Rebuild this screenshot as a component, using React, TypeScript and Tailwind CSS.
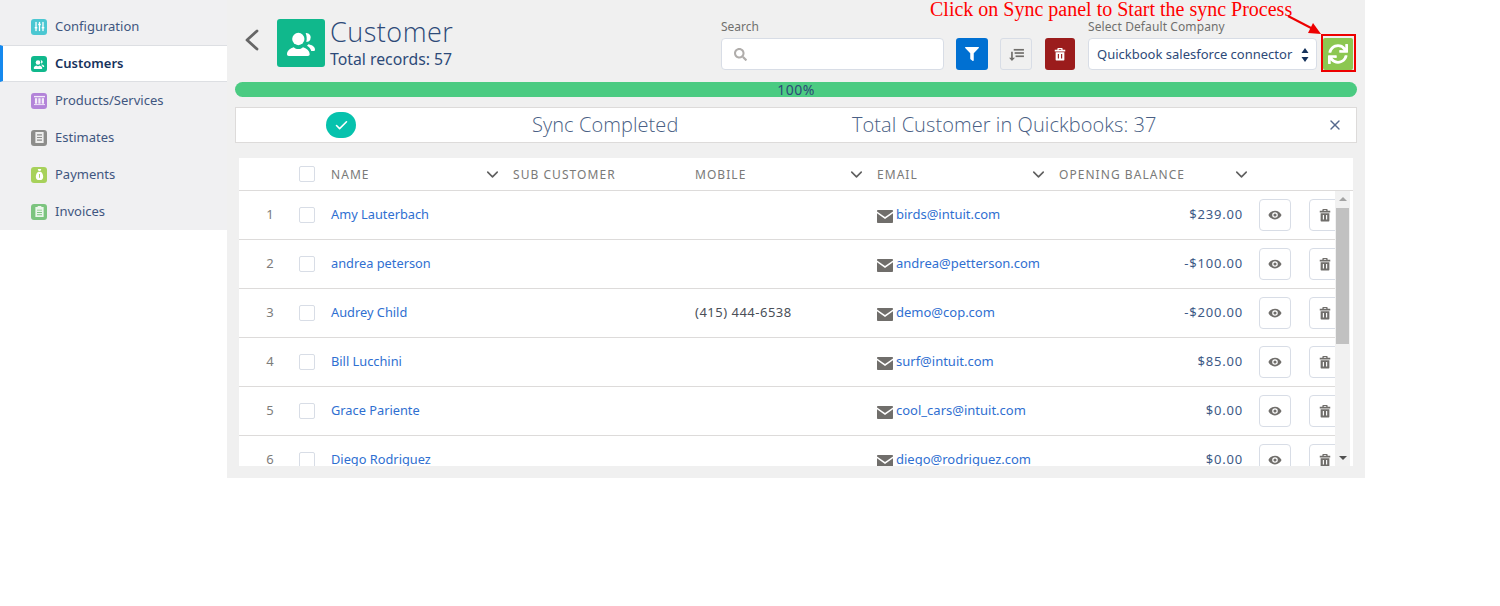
import React from "react";
import { FaSync, FaFilter, FaSearch } from "react-icons/fa";
import { Check, X, ChevronDown } from "lucide-react";

const People = ({ className = "" }: { className?: string }) => (
  <svg viewBox="0 0 24 24" className={className} fill="white">
    <circle cx="10" cy="9" r="4.600" />
    <path d="M1.500 20.500c0-3 2.500-4.600 5-5.400 1 1 2.200 1.400 3.500 1.400s2.500-.4 3.500-1.400c2.500.8 5 2.400 5 5.400 0 .8-.6 1.300-1.300 1.300H2.800c-.7 0-1.300-.5-1.300-1.300z" />
    <path d="M15.500 4.500a3.500 3.500 0 0 1 3.400 5.200 3.500 3.500 0 0 1-2.900 1.600c.6-2.500.2-4.900-.5-6.800z" />
    <path d="M17.500 13c2.500.4 5 1.700 5 4 0 .6-.5 1-1 1h-1.800c-.4-1.800-1.600-3-3.200-4z" />
  </svg>
);

const Trash = ({ className = "", color = "#706e6b" }: { className?: string; color?: string }) => (
  <svg viewBox="0 0 16 16" className={className} fill={color}>
    <path fillRule="evenodd" d="M6 1h4a1 1 0 0 1 1 1v1h3v2H2V3h3V2a1 1 0 0 1 1-1zm.6 1.200V3h2.800v-.8z" />
    <path fillRule="evenodd" d="M3 6h10v8.500a.8.8 0 0 1-.8.800H3.800a.8.8 0 0 1-.8-.8zm2.500 2v5h1.300V8zm3.700 0v5h1.300V8z" />
  </svg>
);

const Eye = () => (
  <svg viewBox="0 0 16 16" className="w-[14px] h-[14px]" fill="#706e6b">
    <path fillRule="evenodd" d="M8 3c3.500 0 6.200 2.200 7.500 5-1.300 2.800-4 5-7.500 5S1.800 10.800.5 8C1.800 5.200 4.500 3 8 3zm0 1.800a3.200 3.200 0 1 0 0 6.400 3.200 3.200 0 0 0 0-6.400zm0 1.400a1.800 1.800 0 1 1 0 3.600 1.800 1.800 0 0 1 0-3.600z" />
  </svg>
);

const Mail = () => (
  <svg viewBox="0 0 16 13" className="w-[16px] h-[13px] shrink-0 mt-[2px]" fill="#706e6b">
    <path d="M0 1.500V.8C0 .4.400 0 .8 0h14.400c.4 0 .8.400.8.800v.7L8 7z" />
    <path d="M0 3.200 8 9l8-5.800v9c0 .4-.4.800-.8.800H.8c-.4 0-.8-.4-.8-.8z" />
  </svg>
);

const SideIcon = ({ kind }: { kind: string }) => {
  const common = "w-[11px] h-[11px]";
  if (kind === "config")
    return (
      <svg viewBox="0 0 12 12" className={common} fill="white">
        <rect x="1.500" y="1" width="1.400" height="10" />
        <rect x="5.300" y="1" width="1.400" height="10" />
        <rect x="9.100" y="1" width="1.400" height="10" />
        <rect x=".8" y="6.500" width="2.800" height="1.600" />
        <rect x="4.600" y="3" width="2.800" height="1.600" />
        <rect x="8.400" y="6.500" width="2.800" height="1.600" />
      </svg>
    );
  if (kind === "customers") return <People className="w-[12px] h-[12px]" />;
  if (kind === "products")
    return (
      <svg viewBox="0 0 12 12" className={common} fill="white" opacity="0.85">
        <rect x="0" y="1" width="12" height="1.500" />
        <rect x="1" y="3.500" width="2.500" height="6" />
        <rect x="4.700" y="3.500" width="2.500" height="6" />
        <rect x="8.400" y="3.500" width="2.500" height="6" />
        <rect x="0" y="10" width="12" height="1" />
      </svg>
    );
  if (kind === "estimates")
    return (
      <svg viewBox="0 0 12 12" className={common} fill="white" opacity="0.85">
        <path fillRule="evenodd" d="M1.500 0h9v12h-9zM3.300 2.500v1.200h5.400V2.500zm0 2.900v1.200h5.400V5.400zm0 2.900v1.200h5.400V8.300z" />
      </svg>
    );
  if (kind === "payments")
    return (
      <svg viewBox="0 0 12 12" className={common} fill="white">
        <path fillRule="evenodd" d="M4 0h4L7 2.200H5zM4.800 3h2.400C9 4 10 6 10 8.500 10 10.500 9 12 7.500 12h-3C3 12 2 10.500 2 8.500 2 6 3 4 4.800 3zm.7 2.500v4h1v-4z" />
      </svg>
    );
  return (
    <svg viewBox="0 0 12 12" className={common} fill="white" opacity="0.85">
      <path fillRule="evenodd" d="M4 0h4v1h2.500v11h-9V1H4zM3.300 4v1h5.400V4zm0 2.500v1h5.400v-1zm0 2.500v1h5.400V9z" />
    </svg>
  );
};

const nav = [
  { label: "Configuration", kind: "config", bg: "bg-[#4bc7d2]" },
  { label: "Customers", kind: "customers", bg: "bg-[#10b88c]", active: true },
  { label: "Products/Services", kind: "products", bg: "bg-[#b383d9]" },
  { label: "Estimates", kind: "estimates", bg: "bg-[#8d8d8b]" },
  { label: "Payments", kind: "payments", bg: "bg-[#a7d15b]" },
  { label: "Invoices", kind: "invoices", bg: "bg-[#7cc47f]" },
];

const rows = [
  ["1", "Amy Lauterbach", "", "birds@intuit.com", "$239.00"],
  ["2", "andrea peterson", "", "andrea@petterson.com", "-$100.00"],
  ["3", "Audrey Child", "(415) 444-6538", "demo@cop.com", "-$200.00"],
  ["4", "Bill Lucchini", "", "surf@intuit.com", "$85.00"],
  ["5", "Grace Pariente", "", "cool_cars@intuit.com", "$0.00"],
  ["6", "Diego Rodriguez", "", "diego@rodriguez.com", "$0.00"],
];

const Box = () => <span className="block w-4 h-4 bg-white border border-[#d8dde6] rounded-[2px]" />;

const HeadCell = ({ label, chevron = true }: { label: string; chevron?: boolean }) => (
  <div className="flex items-center justify-between pr-[11px] pt-[1px] text-[12px] tracking-[1.05px] text-[#7a7a78]">
    <span>{label}</span>
    {chevron && <ChevronDown className="w-[19px] h-[19px] text-[#5f5f5f]" strokeWidth={2} />}
  </div>
);

export default function App() {
  return (
    <div className="relative w-[1500px] h-[606px] bg-white overflow-hidden font-['Noto_Sans','Open_Sans',sans-serif] text-[13px] text-[#16325c]">
      <div className="flex h-[478px]">
        <aside className="w-[227px] shrink-0 self-start pt-2 bg-[#f0f0f2]">
          {nav.map((n) => (
            <div
              key={n.label}
              className={
                n.active
                  ? "h-[37px] flex items-center gap-[8px] pl-[28px] bg-white border-y border-[#dddfe3] border-l-[3px] border-l-[#1589ee] font-semibold text-[#16325c]"
                  : "h-[37px] flex items-center gap-[8px] pl-[31px] text-[#3f5680]"
              }
            >
              <span className={`w-4 h-4 rounded-[3px] flex items-center justify-center ${n.bg}`}>
                <SideIcon kind={n.kind} />
              </span>
              <span>{n.label}</span>
            </div>
          ))}
        </aside>

        <main className="w-[1138px] shrink-0 bg-[#f0f0f0] px-2 flex flex-col">
          <header className="h-[82px] shrink-0 flex">
            <div className="w-[42px] pl-[9px] pt-[28px]">
              <svg viewBox="0 0 16 24" className="w-[16px] h-[24px]" fill="none" stroke="#666666" strokeWidth="2.800" strokeLinecap="round" strokeLinejoin="round">
                <path d="M13 3 3 12l10 9" />
              </svg>
            </div>
            <div className="mt-[19px] w-[48px] h-[48px] rounded-[3px] bg-[#10b88c] flex items-center justify-center">
              <People className="w-[32px] h-[32px]" />
            </div>
            <div className="ml-[5px] mt-[15px] w-[391px]">
              <div className="text-[27px] leading-[34px] font-['Open_Sans'] font-light tracking-[0.5px] text-[#2d4a78]">Customer</div>
              <div className="text-[15.8px] leading-[18px] mt-[1px] text-[#2d4a78]">Total records: 57</div>
            </div>
            <div className="w-[235px] pt-[20px]">
              <div className="text-[12px] leading-[14px] text-[#70706e] mb-[4px]">Search</div>
              <div className="w-[223px] h-[32px] bg-white border border-[#d8dde6] rounded-[4px] flex items-center pl-[12px]">
                <FaSearch className="w-[13px] h-[13px] text-[#b0adab]" />
              </div>
            </div>
            <div className="flex gap-[12px] mt-[38px] h-[32px]">
              <button className="w-[32px] h-[32px] bg-[#0070d2] rounded-[3px] flex items-center justify-center">
                <FaFilter className="w-[14px] h-[14px] text-white" />
              </button>
              <button className="w-[32px] h-[32px] border border-[#d8dde6] rounded-[3px] flex items-center justify-center">
                <svg viewBox="0 0 16 14" className="w-[15px] h-[13px]" fill="#706e6b">
                  <rect x="5" y="1" width="11" height="1.800" />
                  <rect x="6" y="4.500" width="10" height="1.800" />
                  <rect x="7" y="8" width="9" height="1.800" />
                  <path d="M2.200 4h1.800v6.500h2.400L3.100 14 0 10.500h2.200z" />
                </svg>
              </button>
              <button className="ml-[1px] w-[30px] h-[32px] bg-[#9b1c1c] rounded-[3px] flex items-center justify-center">
                <Trash className="w-[14px] h-[14px]" color="white" />
              </button>
            </div>
            <div className="ml-[13px] w-[229px] pt-[20px]">
              <div className="text-[12px] leading-[14px] text-[#70706e] mb-[4px] tracking-[0.1px]">Select Default Company</div>
              <div className="h-[32px] bg-white border border-[#d8dde6] rounded-[4px] flex items-center justify-between pl-[8px] pr-[7px] pt-[1px] text-[13px] text-[#2d4a78] whitespace-nowrap">
                <span>Quickbook salesforce connector</span>
                <svg viewBox="0 0 8 16" className="w-[8px] h-[16px]" fill="#16325c">
                  <path d="M4 1l3.500 5H.5zM4 15 .5 10h7z" />
                </svg>
              </div>
            </div>
            <div className="ml-[4px] mt-[34px] w-[35px] h-[38px] border-2 border-[#ed0000] flex items-end">
              <button className="w-[30px] h-[32px] bg-[#8cc751] rounded-[2px] flex items-center justify-center">
                <FaSync className="w-[20px] h-[20px] text-white" />
              </button>
            </div>
          </header>

          <div className="h-[15px] shrink-0 rounded-full bg-[#4bcb82] flex items-center justify-center text-[14px] leading-none tracking-[0.5px] text-[#2d4a78]">
            100%
          </div>

          <div className="mt-[10px] h-[36px] shrink-0 bg-white border border-[#dddbda] flex items-center relative text-[#4a5f85] font-['Open_Sans'] font-light text-[20px] tracking-[0.07px]">
            <span className="ml-[90px] w-[30px] h-[26px] rounded-full bg-[#06c2ad] flex items-center justify-center">
              <Check className="w-[15px] h-[15px] text-white" strokeWidth={2.500} />
            </span>
            <span className="ml-[176px] w-[320px]">Sync Completed</span>
            <span>Total Customer in Quickbooks: 37</span>
            <X className="absolute right-[13px] top-[9px] w-[16px] h-[16px] text-[#54698d]" strokeWidth={2} />
          </div>

          <div className="mx-1 mt-[15px] bg-white">
            <div className="h-[33px] border-b border-[#dddbda] grid grid-cols-[60px_32px_182px_182px_182px_182px_1fr] items-center">
              <span />
              <Box />
              <HeadCell label="NAME" />
              <HeadCell label="SUB CUSTOMER" chevron={false} />
              <HeadCell label="MOBILE" />
              <HeadCell label="EMAIL" />
              <div className="w-[203px]">
                <HeadCell label="OPENING BALANCE" />
              </div>
            </div>
            <div className="h-[275px] flex overflow-hidden bg-white">
              <div className="w-[1096px] shrink-0 overflow-hidden">
                {rows.map((r) => (
                  <div
                    key={r[0]}
                    className="h-[49px] border-b border-[#dddbda] grid grid-cols-[60px_32px_182px_182px_182px_182px_184px_16px_32px_18px_32px] items-center"
                  >
                    <span className="text-center pl-[2px] text-[#7d7d7b]">{r[0]}</span>
                    <Box />
                    <a className="text-[#2f6fd1] text-[12.8px]">{r[1]}</a>
                    <span />
                    <span className="text-[#4a4f58] tracking-[0.5px]">{r[2]}</span>
                    <span className="flex items-center gap-[3px] text-[#2f6fd1]">
                      <Mail />
                      {r[3]}
                    </span>
                    <span className="text-right text-[#3e5a86] tracking-[0.8px]">{r[4]}</span>
                    <span />
                    <button className="w-[32px] h-[32px] bg-white border border-[#d8dde6] rounded-[4px] flex items-center justify-center">
                      <Eye />
                    </button>
                    <span />
                    <button className="w-[32px] h-[32px] bg-white border border-[#d8dde6] rounded-[4px] flex items-center justify-center">
                      <Trash className="w-[14px] h-[14px]" />
                    </button>
                  </div>
                ))}
              </div>
              <div className="w-[15px] shrink-0 bg-[#f1f1f1] flex flex-col items-center">
                <svg viewBox="0 0 8 4" className="w-[8px] h-[4px] mt-[6px] mb-[7px]" fill="#a3a3a3">
                  <path d="M4 0l4 4H0z" />
                </svg>
                <div className="w-[13px] h-[136px] bg-[#c1c1c1]" />
                <div className="flex-1" />
                <svg viewBox="0 0 8 4" className="w-[8px] h-[4px] mb-[6px]" fill="#505050">
                  <path d="M4 4 0 0h8z" />
                </svg>
              </div>
            </div>
          </div>
        </main>
      </div>

      <div className="absolute left-[930px] top-[-2px] text-[20px] leading-[22px] whitespace-nowrap font-['Liberation_Serif',serif] text-[#ff0000]">
        Click on Sync panel to Start the sync Process
      </div>
      <svg className="absolute left-[1285px] top-[14px] w-[40px] h-[24px]" viewBox="0 0 40 24">
        <path d="M3 2 28 15" stroke="#ed0000" strokeWidth="2" fill="none" />
        <path d="M36 20 23 19 28 9z" fill="#ed0000" />
      </svg>
    </div>
  );
}
